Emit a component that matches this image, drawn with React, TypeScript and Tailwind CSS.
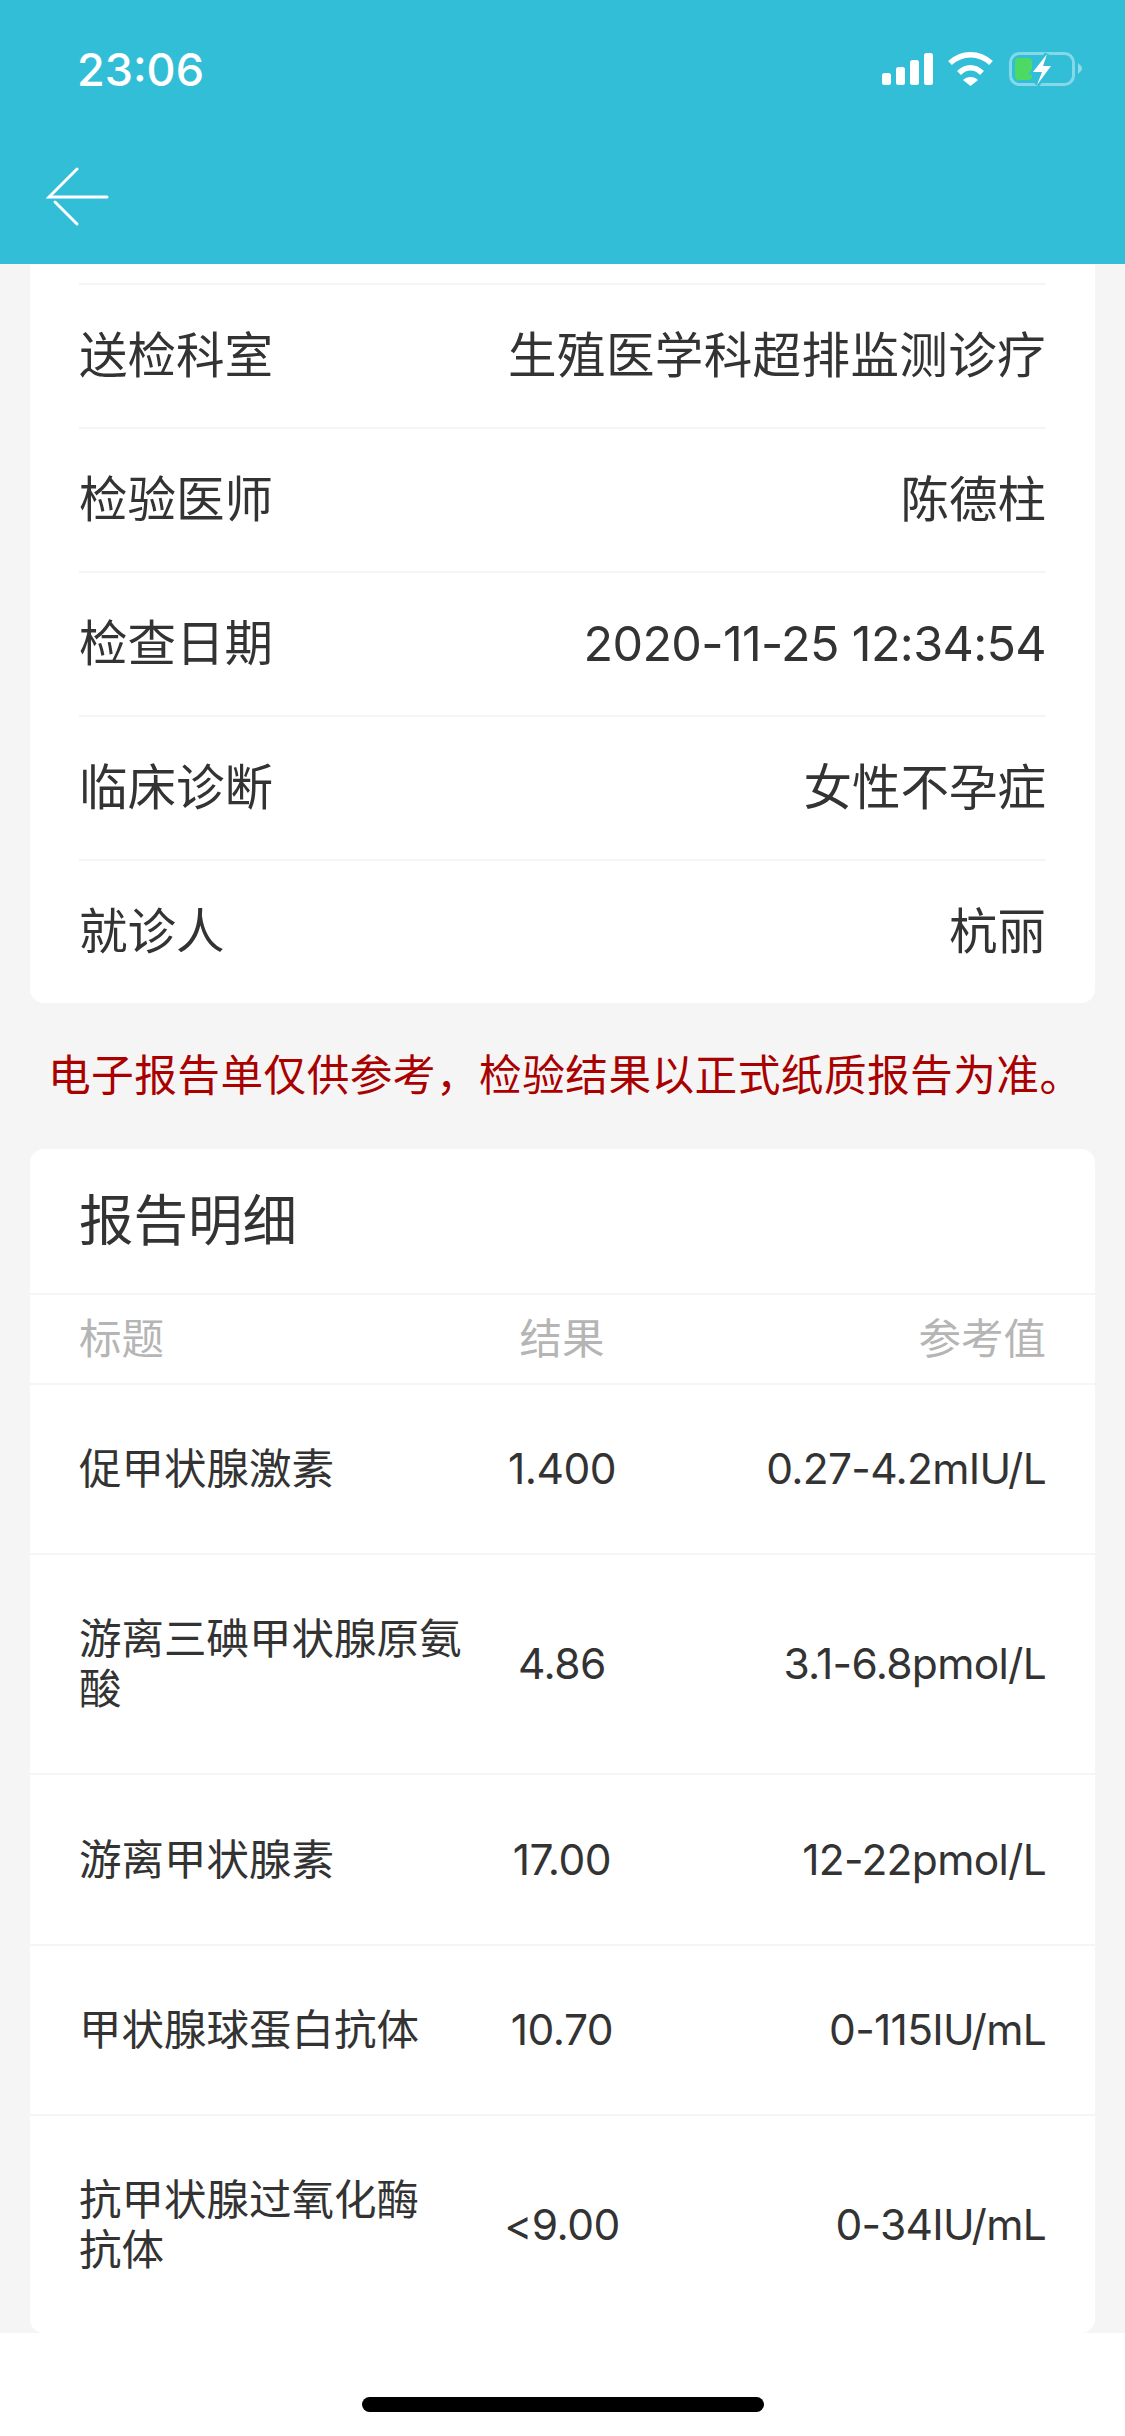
import type { ReactNode } from "react";

const font = { fontFamily: 'Inter, "Noto Sans CJK SC", sans-serif' };

function Info({ label, value, valueClassName }: { label: string; value: string; valueClassName?: string }) {
  return (
    <div className="flex h-[144px] items-center justify-between border-t-2 border-[#f5f5f5] text-[48.5px] leading-[60px] text-[#333333]">
      <span>{label}</span>
      <span className={valueClassName}>{value}</span>
    </div>
  );
}

function Row({ title, result, range, className }: { title: ReactNode; result: string; range: string; className: string }) {
  return (
    <div className={`flex items-center border-t-2 border-[#f5f5f5] px-[49px] text-[42.5px] leading-[50px] text-[#333333] ${className}`}>
      <div className="w-[400px] shrink-0">{title}</div>
      <div className="w-[166px] shrink-0 text-center tracking-[-0.5px]">{result}</div>
      <div className="flex-1 text-right tracking-[-0.7px]">{range}</div>
    </div>
  );
}

export default function App() {
  return (
    <div className="flex h-[2436px] w-[1125px] flex-col overflow-hidden bg-white" style={font}>
      <header className="relative h-[264px] shrink-0 bg-[#33bed8] text-white">
        <div className="flex h-[138px] items-center justify-between pl-[77px] pr-[42px]">
          <span className="text-[45px] font-medium leading-none">23:06</span>
          <svg width="208" height="38" viewBox="0 0 208 38">
            <g fill="#ffffff">
              <rect x="7" y="23" width="9" height="12" rx="2.5" />
              <rect x="21" y="17" width="9" height="18" rx="2.5" />
              <rect x="35" y="10" width="9" height="25" rx="2.5" />
              <rect x="49" y="3" width="9" height="32" rx="2.5" />
            </g>
            <g fill="none" stroke="#ffffff" strokeWidth="5.5">
              <path d="M75 13C87 2 104 2 116 13" />
              <path d="M84 23C91 16 100 16 107 23" />
            </g>
            <path d="M88 30C92 26 99 26 103 30L95.5 36z" fill="#ffffff" />
            <rect x="135.5" y="3.5" width="63" height="31" rx="9" fill="none" stroke="#ffffff" strokeOpacity="0.4" strokeWidth="3" />
            <path d="M203 13l3 3a4 4 0 0 1 0 5l-3 3z" fill="#ffffff" fillOpacity="0.45" />
            <rect x="140" y="8" width="17" height="22" rx="4" fill="#4cd964" />
            <path d="M172 4 158 22h9l-5 13 14-19h-8z" fill="#33bed8" stroke="#33bed8" strokeWidth="5" />
            <path d="M172 4 158 22h9l-5 13 14-19h-8z" fill="#ffffff" />
          </svg>
        </div>
        <svg className="absolute left-[46px] top-[166px]" width="64" height="62" viewBox="0 0 64 62" fill="none" stroke="#ffffff" strokeWidth="3" strokeLinecap="round">
          <path d="M31 3 3 31h58" />
          <path d="M9 36l22 22" />
        </svg>
      </header>

      <main className="flex min-h-0 flex-1 flex-col overflow-hidden bg-[#f5f5f5] px-[30px]">
        <section className="shrink-0 rounded-b-[14px] bg-white px-[49px] pt-[19px]">
          <Info label="送检科室" value="生殖医学科超排监测诊疗" valueClassName="tracking-[0.4px]" />
          <Info label="检验医师" value="陈德柱" />
          <Info label="检查日期" value="2020-11-25 12:34:54" valueClassName="tracking-[-0.65px]" />
          <Info label="临床诊断" value="女性不孕症" />
          <Info label="就诊人" value="杭丽" />
        </section>

        <p className="flex h-[146px] shrink-0 items-center whitespace-nowrap pl-[18px] text-[42.66px] tracking-[0.45px] text-[#a90000]">
          电子报告单仅供参考，检验结果以正式纸质报告为准。
        </p>

        <section className="flex-1 rounded-[14px] bg-white">
          <h2 className="flex h-[144px] items-center px-[49px] text-[54.5px] font-normal text-[#333333]">报告明细</h2>
          <div className="flex h-[90px] items-center border-t-2 border-[#f5f5f5] px-[49px] text-[42.5px] text-[#b5b5b5]">
            <div className="w-[400px] shrink-0">标题</div>
            <div className="w-[166px] shrink-0 text-center">结果</div>
            <div className="flex-1 text-right">参考值</div>
          </div>
          <Row className="h-[170px]" title="促甲状腺激素" result="1.400" range="0.27-4.2mIU/L" />
          <Row className="h-[220px]" title="游离三碘甲状腺原氨酸" result="4.86" range="3.1-6.8pmol/L" />
          <Row className="h-[171px]" title="游离甲状腺素" result="17.00" range="12-22pmol/L" />
          <Row className="h-[170px]" title="甲状腺球蛋白抗体" result="10.70" range="0-115IU/mL" />
          <Row
            className="h-[219px]"
            title={
              <>
                抗甲状腺过氧化酶<span className="whitespace-nowrap">抗体</span>
              </>
            }
            result="<9.00"
            range="0-34IU/mL"
          />
        </section>
      </main>

      <footer className="flex h-[103px] shrink-0 items-start justify-center bg-white pt-[64px]">
        <div className="h-[15px] w-[402px] rounded-full bg-black" />
      </footer>
    </div>
  );
}
